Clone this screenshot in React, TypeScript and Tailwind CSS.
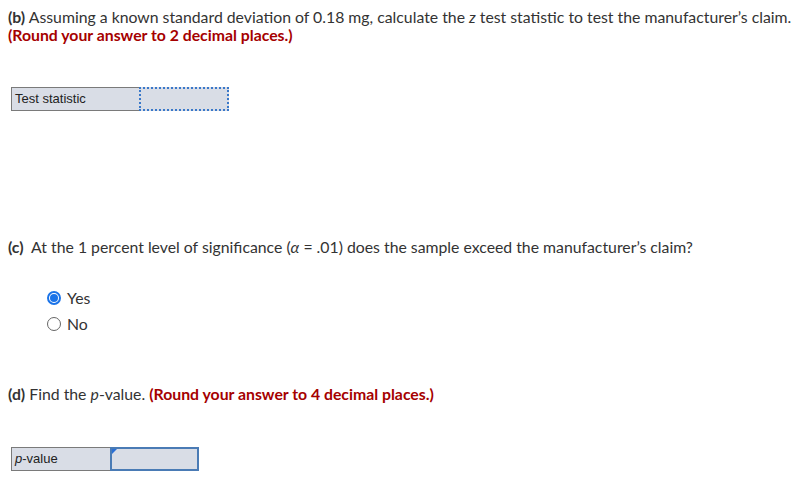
import React from "react";

export default function App() {
  const font = { fontFamily: "Lato, 'Open Sans', sans-serif" };
  return (
    <div className="w-[797px] h-[495px] bg-white text-[#333] relative overflow-hidden" style={font}>
      <div className="pl-[8px] pt-[8px] text-[15.8px] leading-[18px]">
        <p>
          <b>(b)</b> Assuming a known standard deviation of 0.18 mg, calculate the <i>z</i> test statistic to test the manufacturer’s claim.
        </p>
        <p className="font-bold text-[#a50000]">(Round your answer to 2 decimal places.)</p>
      </div>

      <div className="ml-[11px] mt-[43px] flex h-[24px] w-[218px]" style={{ fontFamily: "'Liberation Sans', Arial, sans-serif" }}>
        <div className="w-[128px] bg-[#d9dde6] border border-[#7a7a7a] border-r-0 text-[13px] leading-[22px] pl-[3px] text-[#222]">
          Test statistic
        </div>
        <div className="flex-1 bg-[#d9dde6] border-2 border-dotted border-[#3a78c9]"></div>
      </div>

      <div className="pl-[8px] mt-[127px] text-[15.8px] leading-[17px]">
        <p>
          <b>(c)</b>&nbsp; At the 1 percent level of significance (<i>α</i> = .01) does the sample exceed the manufacturer’s claim?
        </p>
      </div>

      <div className="ml-[47px] mt-[34px] flex flex-col gap-[9px] text-[15.8px] leading-[17px]">
        <label className="flex items-center gap-[6px]">
          <span className="w-[14px] h-[14px] rounded-full border-2 border-[#1a73e8] flex items-center justify-center">
            <span className="w-[8px] h-[8px] rounded-full bg-[#1a73e8]"></span>
          </span>
          Yes
        </label>
        <label className="flex items-center gap-[6px]">
          <span className="w-[14px] h-[14px] rounded-full border border-[#666]"></span>
          No
        </label>
      </div>

      <div className="pl-[8px] mt-[53px] text-[15.8px] leading-[17px]">
        <p>
          <b>(d)</b> Find the <i>p</i>-value. <b className="text-[#a50000]">(Round your answer to 4 decimal places.)</b>
        </p>
      </div>

      <div className="ml-[11px] mt-[45px] flex h-[24px] w-[188px]" style={{ fontFamily: "'Liberation Sans', Arial, sans-serif" }}>
        <div className="w-[99px] bg-[#d9dde6] border border-[#7a7a7a] border-r-0 text-[13px] leading-[22px] pl-[3px] text-[#222]">
          <i>p</i>-value
        </div>
        <div className="relative flex-1 bg-[#d9dde6] border-2 border-[#4a7bb5]">
          <svg className="absolute left-0 top-0" width="5" height="5" viewBox="0 0 5 5">
            <polygon points="0,0 5,0 0,5" fill="#2a6fd6" />
          </svg>
        </div>
      </div>
    </div>
  );
}
